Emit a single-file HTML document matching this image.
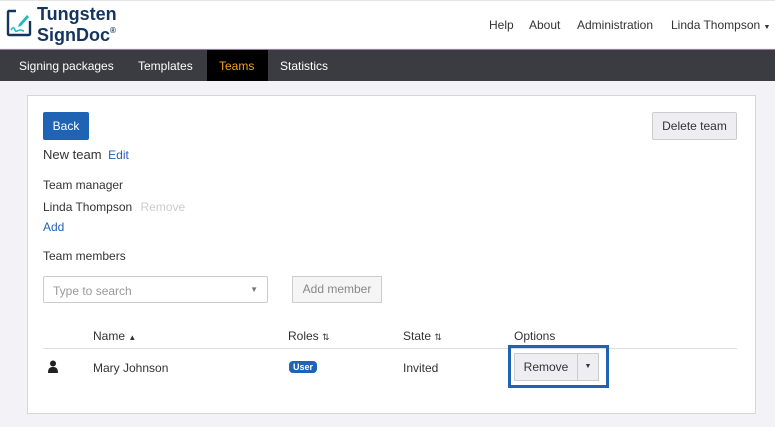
<!DOCTYPE html><html><head><style>
*{box-sizing:border-box;margin:0;padding:0}
body{width:775px;height:427px;overflow:hidden;background:#f3f3f7;font-family:"Liberation Sans",sans-serif;font-size:12px;color:#333;position:relative}
.a{position:absolute;white-space:nowrap}
.hdr{position:absolute;left:0;top:0;width:775px;height:48px;background:#fff;border-top:1px solid #e5e5e5}
.nav{position:absolute;left:0;top:49px;width:775px;height:32px;background:#3b3c42;border-top:1px solid #1fb89a}
.nav span{position:absolute;top:9px;color:#fff;font-size:12px}
.panel{position:absolute;left:27px;top:95px;width:729px;height:319px;background:#fff;border:1px solid #d6d6d6}
.link{color:#1f63b5}
</style></head><body>
<div class="hdr">
<svg class="a" style="left:6px;top:8px" width="26" height="28" viewBox="0 0 26 28"><path d="M10 2H3a1 1 0 0 0-1 1v22a1 1 0 0 0 1 1h20a1 1 0 0 0 1-1V12" fill="none" stroke="#14355f" stroke-width="2.4"/><path d="M13 15l8-9 2 2-8 9-3 1z" fill="#1fb8c4"/><path d="M5 21c2-3 3-3 4 0s3 0 5 0 3 1 4 1" fill="none" stroke="#1fb8c4" stroke-width="1.6"/></svg>
<div class="a" style="left:37px;top:3px;font-size:18px;font-weight:bold;color:#14355f;line-height:21px">Tungsten</div>
<div class="a" style="left:37px;top:24px;font-size:18px;font-weight:bold;color:#14355f;line-height:21px">SignDoc<span style="font-size:8px;position:relative;top:-8px">®</span></div>
<div class="a" style="left:489px;top:17px">Help</div>
<div class="a" style="left:529px;top:17px">About</div>
<div class="a" style="left:577px;top:17px">Administration</div>
<div class="a" style="left:671px;top:17px">Linda Thompson <span style="font-size:7px">▼</span></div>
</div>
<div class="nav">
<span style="left:19px">Signing packages</span>
<span style="left:138px">Templates</span>
<div class="a" style="left:207px;top:0;width:61px;height:31px;background:#000"></div>
<span style="left:219px;color:#f0a020">Teams</span>
<span style="left:280px">Statistics</span>
</div>
<div class="panel"></div>
<div class="a" style="left:43px;top:112px;width:46px;height:28px;background:#1f63b5;border-radius:2px;color:#fff;line-height:28px;text-align:center">Back</div>
<div class="a" style="left:652px;top:112px;width:85px;height:28px;background:#eeeef2;border:1px solid #ccc;border-radius:2px;line-height:26px;text-align:center">Delete team</div>
<div class="a" style="left:43px;top:147px;font-size:13px">New team <span class="link" style="font-size:12px;margin-left:3px">Edit</span></div>
<div class="a" style="left:43px;top:178px">Team manager</div>
<div class="a" style="left:43px;top:200px">Linda Thompson <span style="color:#ccc;margin-left:5px">Remove</span></div>
<div class="a link" style="left:43px;top:220px">Add</div>
<div class="a" style="left:43px;top:249px">Team members</div>
<div class="a" style="left:43px;top:276px;width:225px;height:27px;border:1px solid #ccc;border-radius:2px;color:#999;padding:7px 9px">Type to search<span style="position:absolute;right:9px;top:8px;font-size:8px;color:#777">▼</span></div>
<div class="a" style="left:292px;top:276px;width:90px;height:27px;border:1px solid #ccc;background:#f5f5f5;color:#888;line-height:25px;text-align:center">Add member</div>
<div class="a" style="left:93px;top:329px">Name <span style="font-size:8px">▲</span></div>
<div class="a" style="left:288px;top:329px">Roles <span style="font-size:9px">⇅</span></div>
<div class="a" style="left:403px;top:329px">State <span style="font-size:9px">⇅</span></div>
<div class="a" style="left:514px;top:329px">Options</div>
<div class="a" style="left:43px;top:348px;width:694px;height:1px;background:#ddd"></div>
<svg class="a" style="left:47px;top:360px" width="12" height="13" viewBox="0 0 12 13"><circle cx="6" cy="3.5" r="3" fill="#222"/><path d="M1 13c0-5 2-6 5-6s5 1 5 6z" fill="#222"/></svg>
<div class="a" style="left:93px;top:361px">Mary Johnson</div>
<div class="a" style="left:289px;top:361px;background:#1f63b5;color:#fff;font-size:9px;font-weight:bold;padding:1px 4px;border-radius:4px">User</div>
<div class="a" style="left:403px;top:361px">Invited</div>
<div class="a" style="left:508px;top:345px;width:101px;height:43px;border:3px solid #1f63b5"></div>
<div class="a" style="left:514px;top:353px;width:64px;height:28px;background:#eeeef2;border:1px solid #ccc;line-height:26px;text-align:center">Remove</div>
<div class="a" style="left:577px;top:353px;width:22px;height:28px;background:#eeeef2;border:1px solid #ccc;line-height:26px;text-align:center;font-size:7px">▼</div>
</body></html>
